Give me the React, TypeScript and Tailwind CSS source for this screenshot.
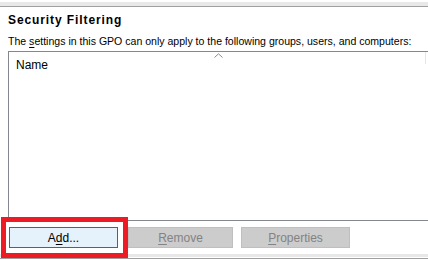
import React from 'react'

const font = { fontFamily: '"Liberation Sans", Arial, sans-serif' }

const WinButton = ({
  label,
  hotkey,
  disabled,
  focused,
  className,
}: {
  label: string
  hotkey: number
  disabled?: boolean
  focused?: boolean
  className?: string
}) => {
  const before = label.slice(0, hotkey)
  const key = label.slice(hotkey, hotkey + 1)
  const after = label.slice(hotkey + 1)
  const tone = focused
    ? 'border-[#0078d7] bg-[#e5f1fb] text-black'
    : disabled
      ? 'border-[#bfbfbf] bg-[#cccccc] text-[#838383]'
      : 'border-[#adadad] bg-[#e1e1e1] text-black'
  return (
    <div
      className={`flex h-[21px] items-center justify-center border text-[12px] leading-none ${tone} ${className ?? ''}`}
    >
      <span>
        {before}
        <span className="underline underline-offset-2">{key}</span>
        {after}
      </span>
    </div>
  )
}

export default function App() {
  return (
    <div
      className="relative h-[260px] w-[428px] overflow-hidden bg-white text-black"
      style={font}
    >
      <div className="pt-[2px]">
        <div className="h-[4px] bg-[#e8e8e8]" />
        <div className="h-px bg-[#a0a0a0]" />
      </div>

      <div className="mt-[6px] pl-[8px] text-[12px] font-bold leading-[15px] tracking-[0.9px]">
        Security Filtering
      </div>
      <div className="mt-[6px] whitespace-nowrap pl-[8px] text-[10.55px] leading-[14px]">
        The <span className="underline underline-offset-2">s</span>ettings in
        this GPO can only apply to the following groups, users, and computers:
      </div>

      <div className="ml-[8px] mt-[3px] h-[170px] border-y border-l border-[#828790]">
        <div className="relative flex h-[24px] items-center">
          <span className="pl-[7px] pt-[2px] text-[12px]">Name</span>
          <svg
            className="absolute left-[205px] top-[1px]"
            width="9"
            height="5"
            viewBox="0 0 9 5"
          >
            <path d="M0.5 4.5 L4.5 0.8 L8.5 4.5" fill="none" stroke="#8a8a8a" />
          </svg>
          <div className="absolute left-[416px] top-0 h-[12px] w-px bg-[#e5e5e5]" />
        </div>
      </div>

      <div className="mt-[6px] flex pl-[9px]">
        <WinButton label="Add..." hotkey={1} focused className="w-[109px]" />
        <WinButton
          label="Remove"
          hotkey={0}
          disabled
          className="ml-[10px] w-[105px]"
        />
        <WinButton
          label="Properties"
          hotkey={0}
          disabled
          className="ml-[8px] w-[109px]"
        />
      </div>

      <div className="mt-[6px]">
        <div className="h-[3px] bg-[#e8e8e8]" />
        <div className="h-px bg-white" />
        <div className="h-px bg-[#a0a0a0]" />
      </div>

      <div className="absolute left-[1px] top-[217px] h-[41px] w-[127px] border-[5px] border-[#ed1c24] bg-transparent" />
    </div>
  )
}
